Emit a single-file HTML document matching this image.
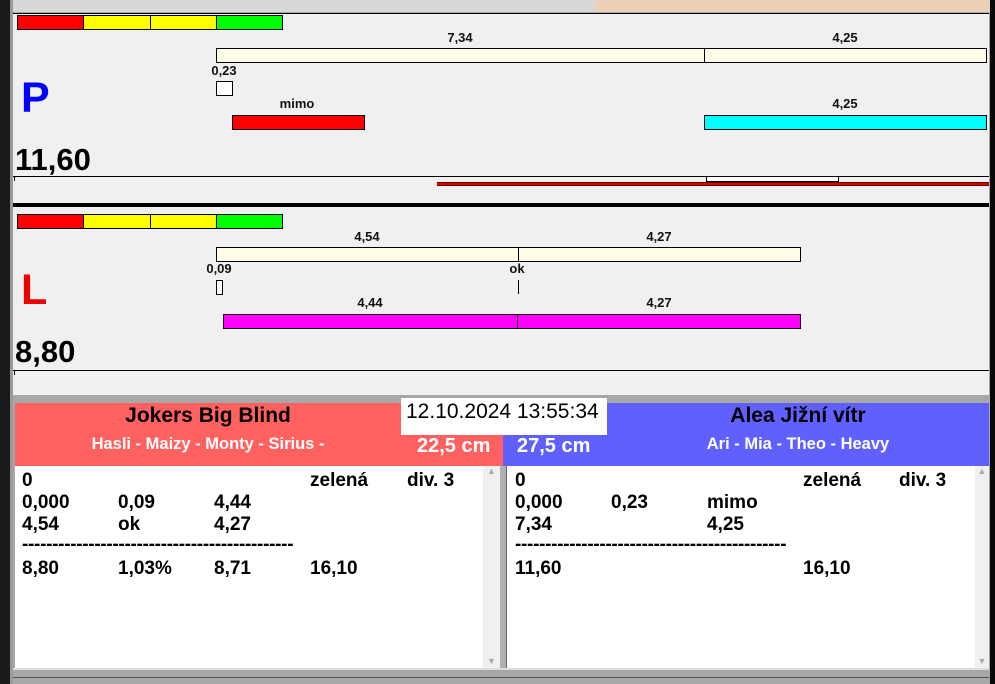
<!DOCTYPE html>
<html><head><meta charset="utf-8"><style>
*{margin:0;padding:0;box-sizing:border-box}
body{width:995px;height:684px;position:relative;overflow:hidden;background:#a8a8a8;font-family:"Liberation Sans",Arial,sans-serif;font-weight:bold}
.a{position:absolute}
.b{position:absolute;border:1px solid #000}
.t{position:absolute;font-size:13px;color:#111;transform:translateX(-50%);white-space:nowrap}
.r{position:absolute;font-size:19px;color:#000;white-space:nowrap}
</style></head><body>
<div class="a" style="left:0;top:0;width:10px;height:684px;background:#1a1a1a"></div>
<div class="a" style="left:990px;top:0;width:5px;height:684px;background:#0a0a0a"></div>
<div class="a" style="left:10px;top:0;width:585px;height:12px;background:#d8d8d8"></div>
<div class="a" style="left:595px;top:0;width:395px;height:12px;background:#ecd0b8"></div>
<div class="a" style="left:10px;top:0;width:3px;height:684px;background:#9a9a9a"></div>
<!-- panel P -->
<div class="a" style="left:13px;top:13px;width:976px;height:191px;background:#f0f0f0;border-top:1px solid #000"></div>
<div class="b" style="left:17px;top:15px;width:67px;height:15px;background:#f00"></div>
<div class="b" style="left:83px;top:15px;width:68px;height:15px;background:#ff0"></div>
<div class="b" style="left:150px;top:15px;width:67px;height:15px;background:#ff0"></div>
<div class="b" style="left:216px;top:15px;width:67px;height:15px;background:#0f0"></div>
<div class="t" style="left:460px;top:30px">7,34</div>
<div class="t" style="left:845px;top:30px">4,25</div>
<div class="b" style="left:216px;top:48px;width:489px;height:15px;background:#fffde8"></div>
<div class="b" style="left:704px;top:48px;width:283px;height:15px;background:#fffde8"></div>
<div class="t" style="left:224px;top:63px">0,23</div>
<div class="b" style="left:216px;top:81px;width:17px;height:15px;background:#fff"></div>
<div class="t" style="left:297px;top:96px">mimo</div>
<div class="b" style="left:232px;top:115px;width:133px;height:15px;background:#f00"></div>
<div class="t" style="left:845px;top:96px">4,25</div>
<div class="b" style="left:704px;top:115px;width:283px;height:15px;background:#0ff"></div>
<div class="a" style="left:21px;top:74px;font-size:43px;color:#00f">P</div>
<div class="a" style="left:15px;top:142px;font-size:31px;color:#000">11,60</div>
<div class="a" style="left:13px;top:176px;width:976px;height:1px;background:#000"></div>
<div class="a" style="left:14px;top:176px;width:1px;height:5px;background:#000"></div>
<div class="b" style="left:706px;top:176px;width:133px;height:6px;background:#fff"></div>
<div class="a" style="left:437px;top:182px;width:552px;height:4px;background:#e00000;border-top:1px solid #600;border-bottom:1px solid #600"></div>
<div class="a" style="left:13px;top:203px;width:976px;height:4px;background:#000"></div>
<!-- panel L -->
<div class="a" style="left:13px;top:207px;width:976px;height:188px;background:#f0f0f0"></div>
<div class="b" style="left:17px;top:214px;width:67px;height:15px;background:#f00"></div>
<div class="b" style="left:83px;top:214px;width:68px;height:15px;background:#ff0"></div>
<div class="b" style="left:150px;top:214px;width:67px;height:15px;background:#ff0"></div>
<div class="b" style="left:216px;top:214px;width:67px;height:15px;background:#0f0"></div>
<div class="t" style="left:367px;top:229px">4,54</div>
<div class="t" style="left:659px;top:229px">4,27</div>
<div class="b" style="left:216px;top:247px;width:303px;height:15px;background:#fffde8"></div>
<div class="b" style="left:518px;top:247px;width:283px;height:15px;background:#fffde8"></div>
<div class="t" style="left:219px;top:261px">0,09</div>
<div class="t" style="left:517px;top:261px">ok</div>
<div class="b" style="left:216px;top:280px;width:7px;height:15px;background:#fff"></div>
<div class="a" style="left:518px;top:280px;width:1px;height:14px;background:#000"></div>
<div class="t" style="left:370px;top:295px">4,44</div>
<div class="t" style="left:659px;top:295px">4,27</div>
<div class="b" style="left:223px;top:314px;width:295px;height:15px;background:#f0f"></div>
<div class="b" style="left:517px;top:314px;width:284px;height:15px;background:#f0f"></div>
<div class="a" style="left:21px;top:266px;font-size:43px;color:#e00">L</div>
<div class="a" style="left:15px;top:334px;font-size:31px;color:#000">8,80</div>
<div class="a" style="left:13px;top:370px;width:976px;height:1px;background:#000"></div>
<div class="a" style="left:14px;top:370px;width:1px;height:5px;background:#000"></div>
<!-- headers -->
<div class="a" style="left:15px;top:403px;width:488px;height:63px;background:#ff6060"></div>
<div class="a" style="left:503px;top:403px;width:486px;height:63px;background:#6060ff"></div>
<div class="a" style="left:15px;top:404px;width:386px;text-align:center;font-size:21px;color:#000">Jokers Big Blind</div>
<div class="a" style="left:15px;top:435px;width:386px;text-align:center;font-size:16.5px;color:#fff">Hasli - Maizy - Monty - Sirius -</div>
<div class="a" style="left:417px;top:435px;font-size:20px;color:#fff">22,5 cm</div>
<div class="a" style="left:517px;top:435px;font-size:20px;color:#fff">27,5 cm</div>
<div class="a" style="left:607px;top:404px;width:382px;text-align:center;font-size:21px;color:#000">Alea Jižní vítr</div>
<div class="a" style="left:607px;top:435px;width:382px;text-align:center;font-size:16.5px;color:#fff">Ari - Mia - Theo - Heavy</div>
<div class="a" style="left:401px;top:398px;width:206px;height:37px;background:#fff;font-weight:normal;font-size:21px;padding:2px 0 0 5px;color:#000;white-space:nowrap">12.10.2024 13:55:34</div>
<!-- lists -->
<div class="a" style="left:15px;top:466px;width:468px;height:202px;background:#fff"></div>
<div class="a" style="left:483px;top:466px;width:17px;height:202px;background:#f0f0f0;color:#aaa;font-size:9px;text-align:center">▲<div style="position:absolute;bottom:2px;width:17px">▼</div></div>
<div class="a" style="left:500px;top:466px;width:7px;height:202px;background:#b0b0b0;border-right:1px solid #666"></div>
<div class="a" style="left:507px;top:466px;width:468px;height:202px;background:#fff"></div>
<div class="a" style="left:975px;top:466px;width:14px;height:202px;background:#f0f0f0;color:#aaa;font-size:9px;text-align:center">▲<div style="position:absolute;bottom:2px;width:14px">▼</div></div>
<div class="a" style="left:13px;top:668px;width:976px;height:16px;background:#a8a8a8;border-top:2px solid #ddd"></div>
<div class="a" style="left:13px;top:677px;width:976px;height:1px;background:#555"></div>

<div class="r" style="left:22px;top:470px">0</div><div class="r" style="left:310px;top:470px">zelená</div><div class="r" style="left:407px;top:470px">div. 3</div>
<div class="r" style="left:22px;top:492px">0,000</div><div class="r" style="left:118px;top:492px">0,09</div><div class="r" style="left:214px;top:492px">4,44</div>
<div class="r" style="left:22px;top:514px">4,54</div><div class="r" style="left:118px;top:514px">ok</div><div class="r" style="left:214px;top:514px">4,27</div>
<div class="r" style="left:22px;top:534px;letter-spacing:-0.3px">---------------------------------------------</div>
<div class="r" style="left:22px;top:558px">8,80</div><div class="r" style="left:118px;top:558px">1,03%</div><div class="r" style="left:214px;top:558px">8,71</div><div class="r" style="left:310px;top:558px">16,10</div>

<div class="r" style="left:515px;top:470px">0</div><div class="r" style="left:803px;top:470px">zelená</div><div class="r" style="left:899px;top:470px">div. 3</div>
<div class="r" style="left:515px;top:492px">0,000</div><div class="r" style="left:611px;top:492px">0,23</div><div class="r" style="left:707px;top:492px">mimo</div>
<div class="r" style="left:515px;top:514px">7,34</div><div class="r" style="left:707px;top:514px">4,25</div>
<div class="r" style="left:515px;top:534px;letter-spacing:-0.3px">---------------------------------------------</div>
<div class="r" style="left:515px;top:558px">11,60</div><div class="r" style="left:803px;top:558px">16,10</div>
</body></html>
